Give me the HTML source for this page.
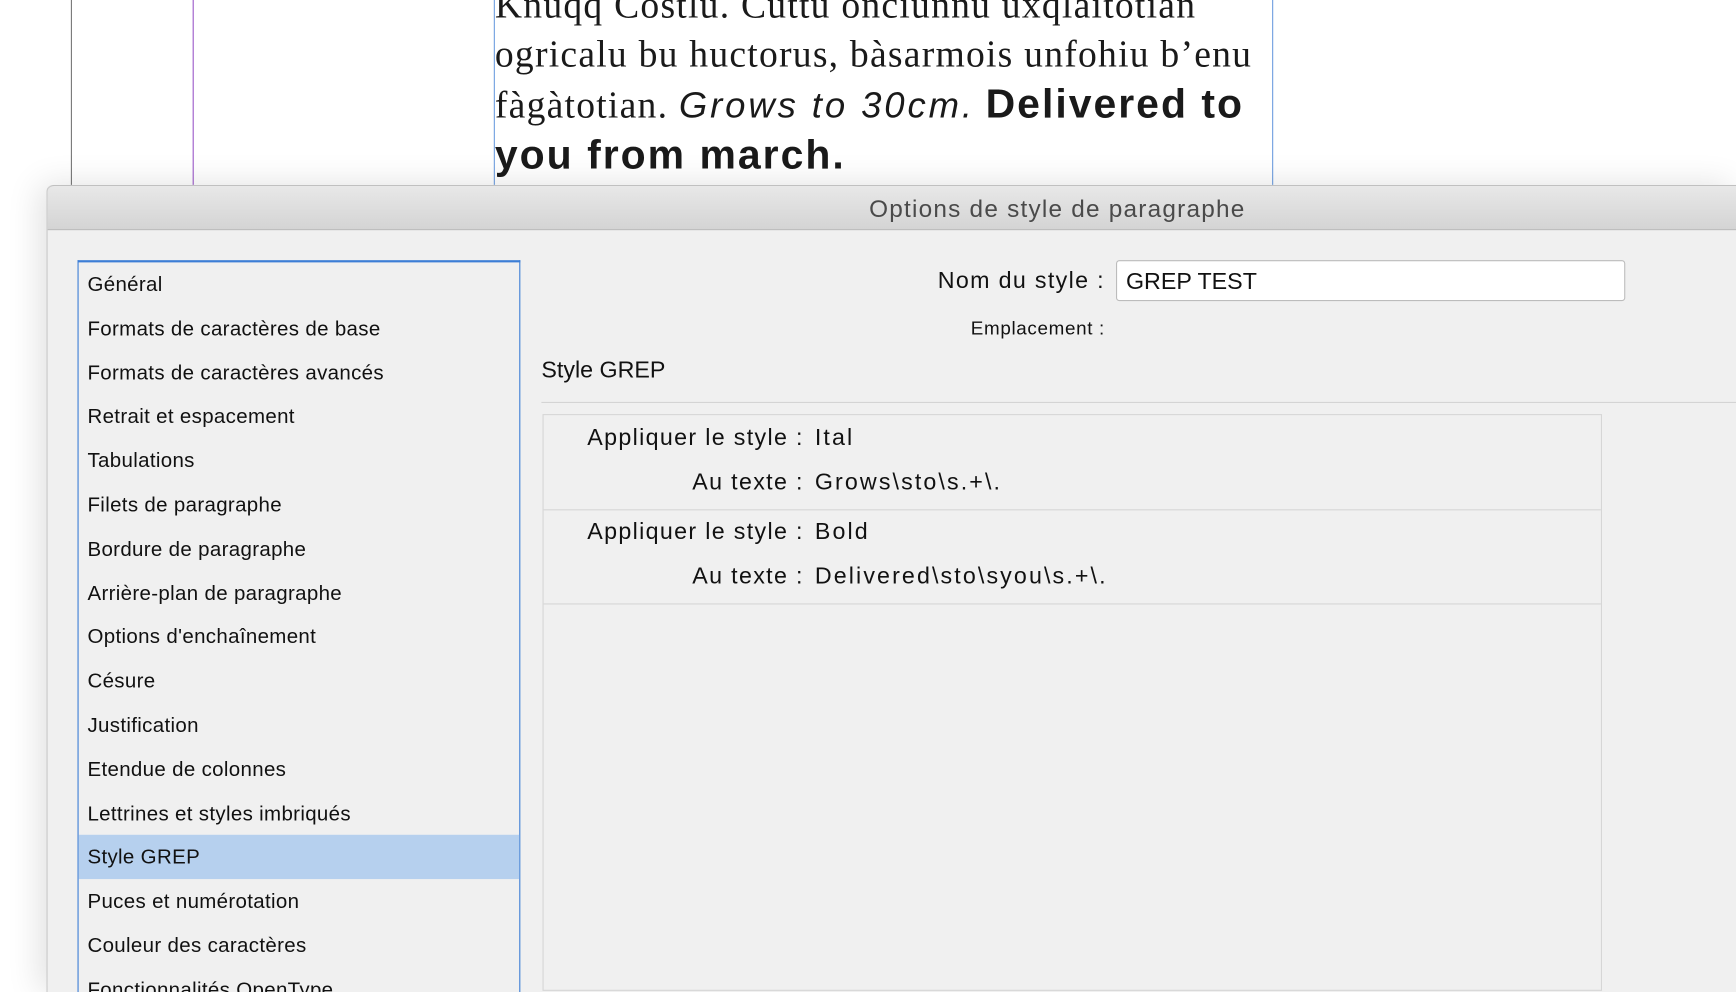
<!DOCTYPE html>
<html><head><meta charset="utf-8"><style>
html,body{margin:0;padding:0;width:1736px;height:992px;overflow:hidden;background:#fff}
#s{position:absolute;left:0;top:0;width:1568px;height:896px;overflow:hidden;transform:scale(1.10714);transform-origin:0 0;font-family:"Liberation Sans","DejaVu Sans",sans-serif}
.v{position:absolute;top:0;height:168px;width:1px}
.txt{position:absolute;left:447px;top:-16px;width:700px;height:180px;overflow:hidden;font-family:"Liberation Serif",serif;font-size:34px;line-height:44px;color:#1a1a1a;white-space:nowrap;letter-spacing:1.1px}
.txt i{font-family:'Liberation Sans',sans-serif;font-size:33px;letter-spacing:2.6px}
.txt b{font-family:'Liberation Sans',sans-serif;font-size:37px;letter-spacing:1.8px}
.dlg{position:absolute;left:42px;top:167px;width:1526px;height:729px;background:#f0f0f0;border-radius:6px 0 0 0;box-shadow:-6px 0 30px rgba(0,0,0,.12);border-left:1px solid #c8c8c8}
.tb{position:absolute;left:0;top:0;right:0;height:39px;background:linear-gradient(#e8e8e8,#d4d4d4);border-bottom:1px solid #b0b0b0;border-radius:6px 0 0 0;border-top:1px solid #c0c0c0}
.tb span{position:absolute;left:742px;top:8px;font-size:22px;color:#4a4a4a;letter-spacing:1.1px}
.a{position:absolute;font-size:19px;color:#111;white-space:nowrap}
.list{position:absolute;left:70px;top:235px;width:398px;height:661px;overflow:hidden;border:1px solid #3d7ed6;border-top:2px solid #3d7ed6;border-bottom:none;background:#f0f0f0}
.list div{height:39.8px;line-height:39.8px;padding-left:8px;font-size:18.5px;color:#111;letter-spacing:0.3px}
.list .sel{background:#b6d0ee}
.inp{position:absolute;left:1008px;top:235px;width:458px;height:35px;background:#fff;border:1px solid #bcbcbc;border-radius:3px}
.box{position:absolute;left:490px;top:374px;width:955px;height:519px;border:1px solid #d6d6d6}
.row{position:absolute;left:0;width:955px;height:85px;border-bottom:1px solid #d6d6d6}
.l{position:absolute;right:720px;font-size:21px;color:#111;white-space:nowrap;letter-spacing:1.2px}
.r{position:absolute;left:245px;font-size:21px;color:#111;white-space:nowrap;letter-spacing:1.9px}
</style></head><body><div id="s">
<div class="v" style="left:64px;background:#777"></div>
<div class="v" style="left:174px;background:#9b59c9"></div>
<div class="v" style="left:446px;background:#6f9fe0"></div>
<div class="v" style="left:1149px;background:#6f9fe0"></div>
<div class="txt">Knuqq Costlu. Cuttu onciunnu uxqlaitotian<br>ogricalu bu huctorus, bàsarmois unfohiu b’enu<br>fàgàtotian. <i>Grows to 30cm.</i> <b>Delivered to</b><br><b>you from march.</b></div>
<div class="dlg"><div class="tb"><span>Options de style de paragraphe</span></div></div>
<div class="list">
<div>Général</div><div>Formats de caractères de base</div><div>Formats de caractères avancés</div><div>Retrait et espacement</div><div>Tabulations</div><div>Filets de paragraphe</div><div>Bordure de paragraphe</div><div>Arrière-plan de paragraphe</div><div>Options d'enchaînement</div><div>Césure</div><div>Justification</div><div>Etendue de colonnes</div><div>Lettrines et styles imbriqués</div><div class="sel">Style GREP</div><div>Puces et numérotation</div><div>Couleur des caractères</div><div>Fonctionnalités OpenType</div>
</div>
<div class="a" style="right:570px;top:242px;font-size:21px;letter-spacing:1.2px">Nom du style :</div>
<div class="inp"></div>
<div class="a" style="left:1017px;top:243px;font-size:21px">GREP TEST</div>
<div class="a" style="right:570px;top:287px;font-size:17px;letter-spacing:0.6px">Emplacement :</div>
<div class="a" style="left:489px;top:323px;font-size:21px">Style GREP</div>
<div style="position:absolute;left:489px;top:363px;width:1079px;height:1px;background:#d4d4d4"></div>
<div class="box">
<div class="row" style="top:0"><div class="l" style="top:9px">Appliquer le style :</div><div class="r" style="top:9px">Ital</div><div class="l" style="top:49px">Au texte :</div><div class="r" style="top:49px">Grows\sto\s.+\.</div></div>
<div class="row" style="top:85px;height:85px"><div class="l" style="top:9px">Appliquer le style :</div><div class="r" style="top:9px">Bold</div><div class="l" style="top:49px">Au texte :</div><div class="r" style="top:49px">Delivered\sto\syou\s.+\.</div></div>
</div>
</div></body></html>
